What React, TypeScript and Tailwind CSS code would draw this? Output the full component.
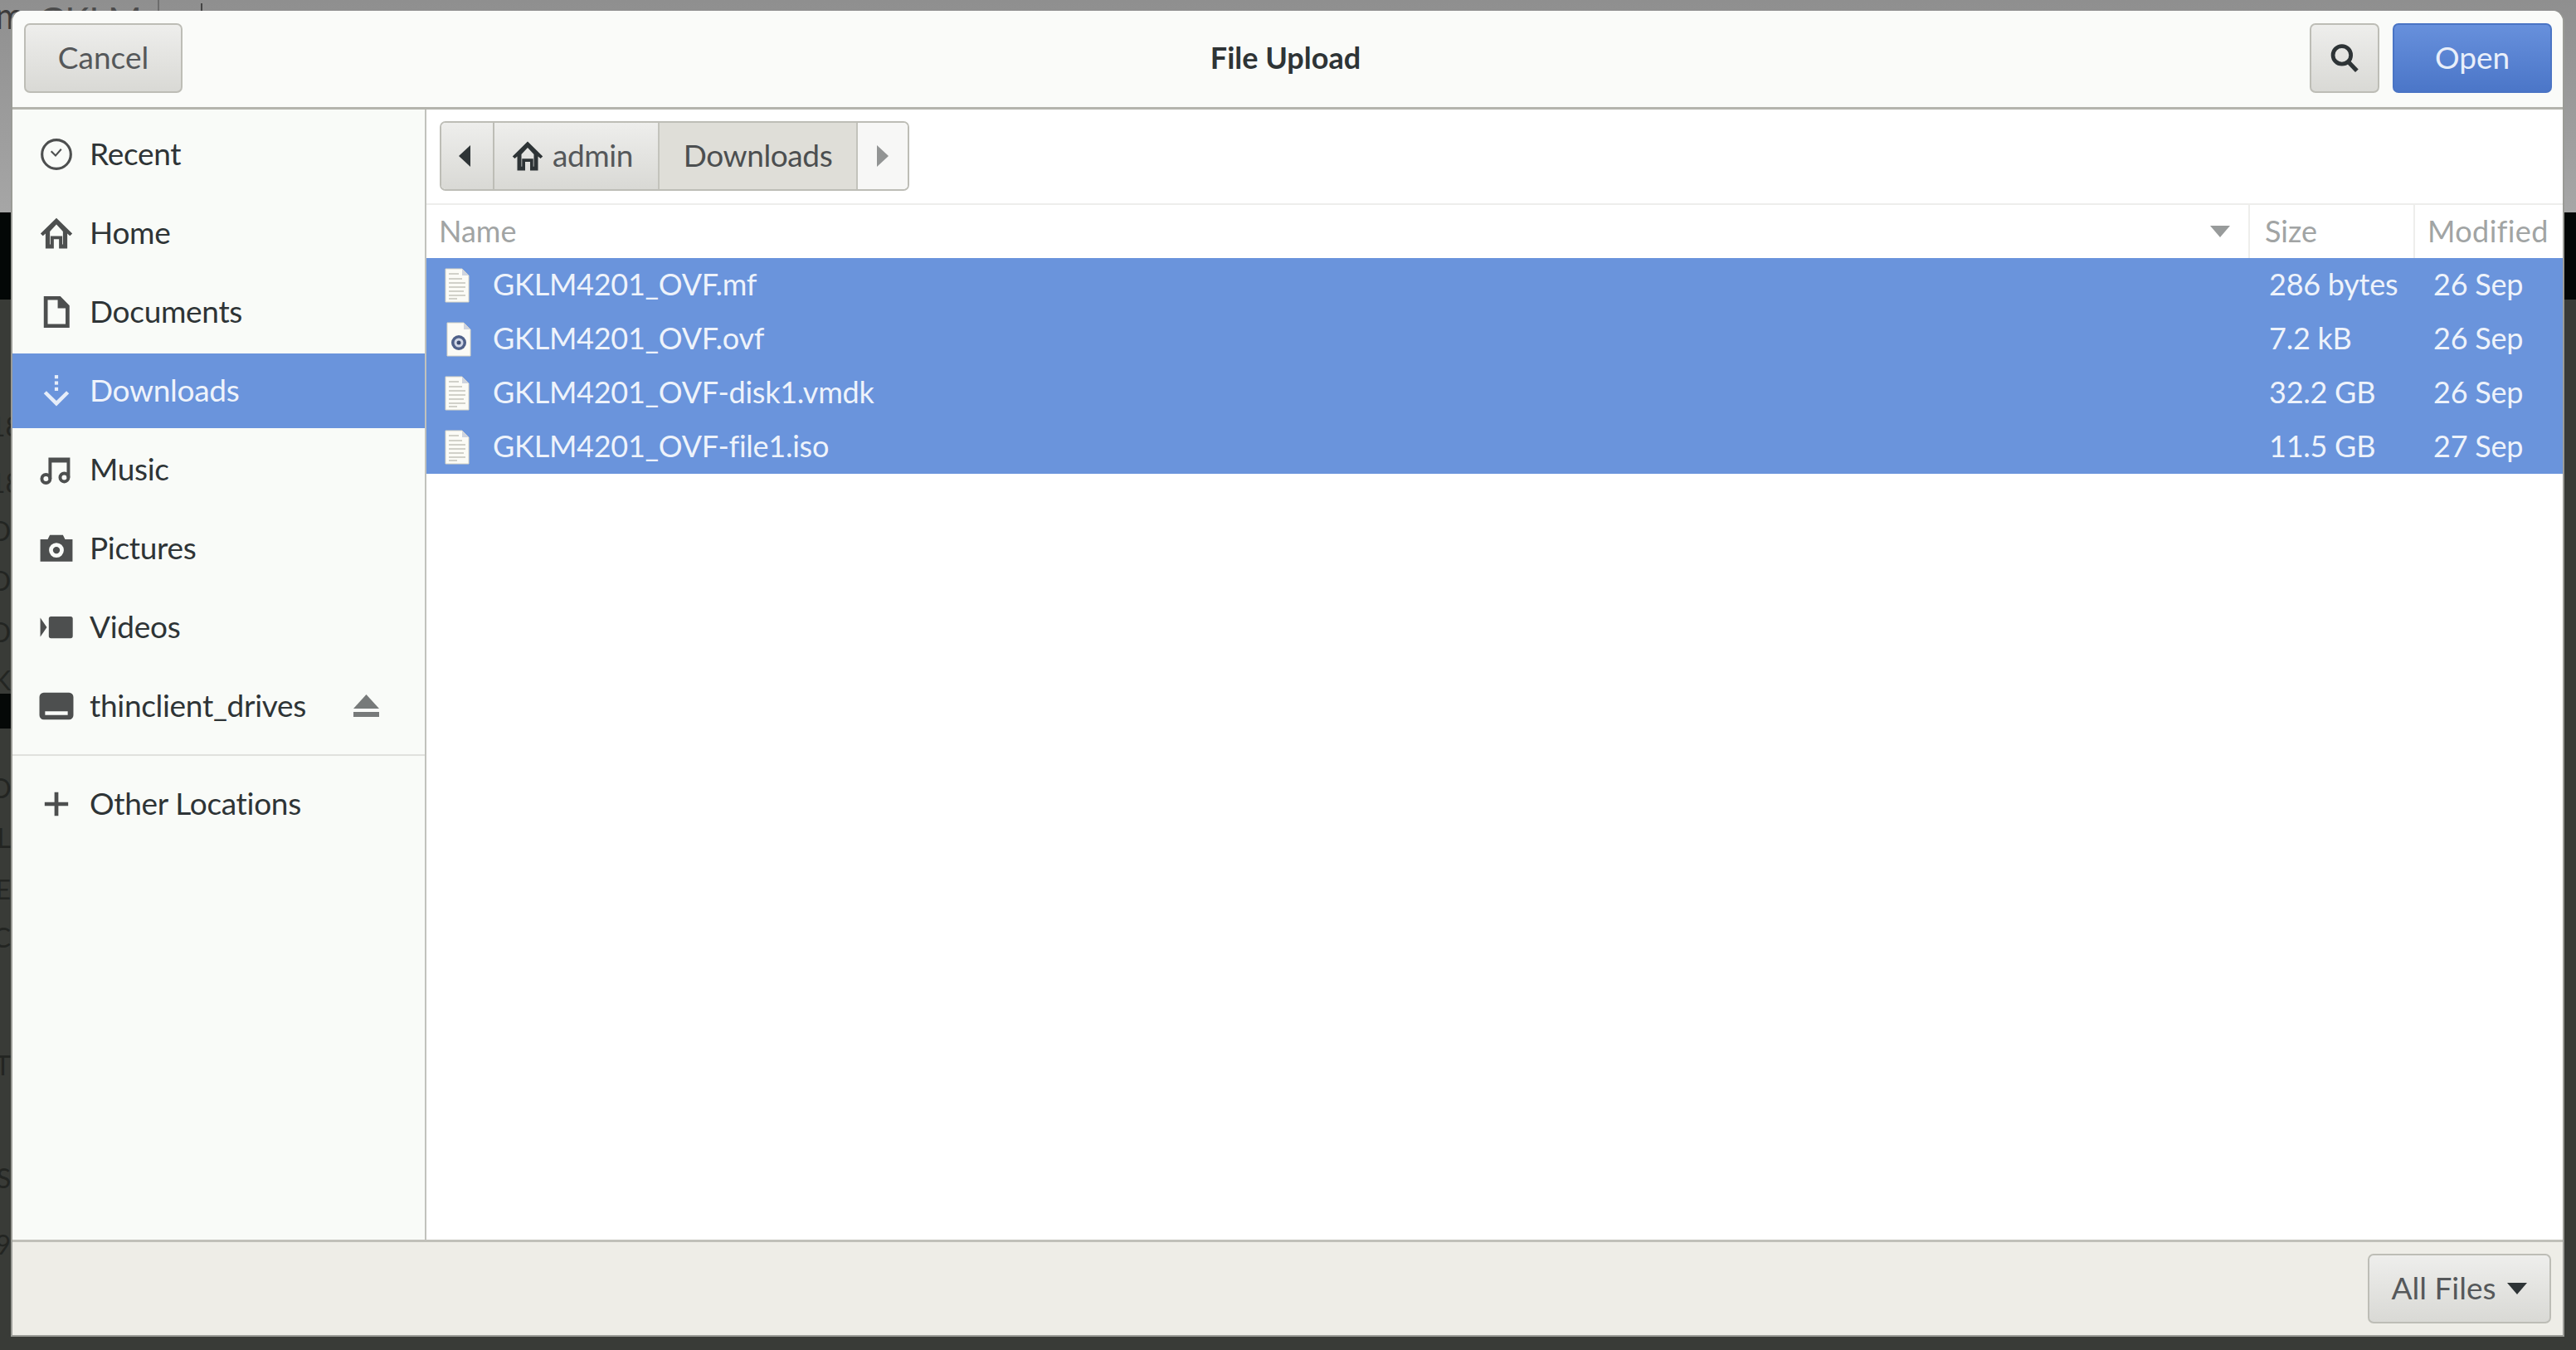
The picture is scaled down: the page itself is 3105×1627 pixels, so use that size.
import React from "react";

const font = "font-['Lato','Noto_Sans',sans-serif]";

function Ico({ children, className }: { children: React.ReactNode; className: string }) {
  return (
    <svg viewBox="0 0 16 16" className={className} fill="currentColor" stroke="none">
      {children}
    </svg>
  );
}

const icons: Record<string, React.ReactNode> = {
  clock: (
    <g fill="none" stroke="currentColor">
      <circle cx="8" cy="8" r="6.6" strokeWidth="1.2" />
      <path d="M5.6 6.6 7.6 8.6l2.6-3" strokeWidth="0.8" />
    </g>
  ),
  home: <path d="M8 1 .7 8.2l1.1 1L3 8.2V15h3.8v-4.2h2.4V15H13V8.2l1.2 1 1.1-1L8 1Zm-3 8.2v3.9h.3V9.3h5.4v3.8h.3V7.2L8 4 5 7.2v2Z" fillRule="evenodd" />,
  doc: <path d="M2.2.8h7.6L14 5v10.2H2.2V.8Zm1.8 1.7v11h8.2V6.3H8.6V2.5H4Z" fillRule="evenodd" />,
  down: (
    <g>
      <rect x="7.2" y="0.8" width="1.6" height="1.6" />
      <rect x="7.2" y="3.6" width="1.6" height="1.6" />
      <rect x="7.2" y="6.4" width="1.6" height="1.6" />
      <path d="M2.2 9.2 8 15l5.8-5.8-1.2-1.1L8 12.6 3.4 8.1 2.2 9.2Z" />
    </g>
  ),
  music: (
    <g fill="none" stroke="currentColor">
      <circle cx="3.2" cy="12.2" r="1.9" strokeWidth="1.5" />
      <circle cx="11.6" cy="11.6" r="1.9" strokeWidth="1.5" />
      <path d="M5.1 12.2V3.2h8.4v8.4" strokeWidth="1.5" />
      <path d="M5.1 4h8.4" strokeWidth="1.5" />
    </g>
  ),
  camera: <path d="M5 1.8h6l1 2h3.4V14H.6V3.8H4l1-2ZM8 5.4a3.4 3.4 0 1 0 0 6.8 3.4 3.4 0 0 0 0-6.8Zm0 1.8a1.6 1.6 0 1 1 0 3.2 1.6 1.6 0 0 1 0-3.2Z" fillRule="evenodd" />,
  video: <path d="M5.5 3h9a1 1 0 0 1 1 1v8a1 1 0 0 1-1 1h-9a1 1 0 0 1-1-1V4a1 1 0 0 1 1-1ZM.6 3.6 3.6 8l-3 4.4V3.6Z" />,
  drive: <path d="M2.2 1.8h11.6A2 2 0 0 1 15.8 3.8v8.4a2 2 0 0 1-2 2H2.2a2 2 0 0 1-2-2V3.8a2 2 0 0 1 2-2Zm.6 8.6v1.7h10.4v-1.7H2.8Z" fillRule="evenodd" />,
  plus: <path d="M7.1 2.6h1.8v4.5h4.5v1.8H8.9v4.5H7.1V8.9H2.6V7.1h4.5V2.6Z" />,
};

function SidebarRow({ icon, label, active, children }: { icon: string; label: string; active?: boolean; children?: React.ReactNode }) {
  return (
    <div className="h-[95px] flex items-center">
      <div className={`h-[90px] w-full flex items-center pl-[32px] ${active ? "bg-[#6a94dc] text-[#eef3fb]" : "text-[#2e3436]"}`}>
        <span className={active ? "text-[#e6edf9]" : "text-[#4d4f4f]"}>
          <Ico className="w-[42px] h-[42px]">{icons[icon]}</Ico>
        </span>
        <span className="ml-[19px] text-[37px] leading-none tracking-[-0.3px] pb-[2px]">{label}</span>
        {children}
      </div>
    </div>
  );
}

function FileIcon({ disc }: { disc?: boolean }) {
  return (
    <svg viewBox="0 0 30 42" className="w-[30px] h-[42px] shrink-0">
      <path d="M1 1h20l8 8v32H1z" fill="#fbfbf6" stroke="#d9d6c6" strokeWidth="1" />
      <path d="M21 1v8h8z" fill="#cfd4de" />
      {disc ? (
        <g>
          <circle cx="15" cy="25" r="9" fill="#4f6189" />
          <circle cx="15" cy="25" r="5.5" fill="#cfd6e6" />
          <circle cx="15" cy="25" r="2.5" fill="#3d4c70" />
        </g>
      ) : (
        <g stroke="#c3c3ba" strokeWidth="1.6">
          <path d="M5 7h12M5 13h16M5 18h20M5 23h20M5 28h18M5 33h20M5 37h10" />
        </g>
      )}
    </svg>
  );
}

function FileRow({ name, size, date, disc }: { name: string; size: string; date: string; disc?: boolean }) {
  return (
    <div className="h-[65px] flex items-center text-[#eef3fb] text-[36px] leading-none tracking-[-0.25px]">
      <div className={`w-[2198px] flex items-center ${disc ? "pl-[24px]" : "pl-[22px]"}`}>
        <FileIcon disc={disc} />
        <span className={`${disc ? "ml-[26px]" : "ml-[28px]"} pb-[3px]`}>{name}</span>
      </div>
      <div className="w-[198px] pl-[23px] pb-[3px]">{size}</div>
      <div className="pl-[23px] pb-[3px]">{date}</div>
    </div>
  );
}

const gradBtn = "bg-linear-to-b from-[#eeeeec] to-[#d9d9d5] border-2 border-[#bdbdb6] rounded-[7px]";

const leftMarks: [string, string][] = [
  ["top-[498px]", "18"],
  ["top-[566px]", "18"],
  ["top-[624px]", "D"],
  ["top-[684px]", "D"],
  ["top-[746px]", "D"],
  ["top-[804px]", "K"],
  ["top-[842px]", "K"],
  ["top-[934px]", "O"],
  ["top-[994px]", "L"],
  ["top-[1056px]", "E"],
  ["top-[1114px]", "C"],
  ["top-[1268px]", "T"],
  ["top-[1404px]", "S"],
  ["top-[1484px]", "9"],
];

export default function App() {
  return (
    <div className={`relative w-[3105px] h-[1627px] overflow-hidden bg-[#383a36] ${font}`}>
      <div className="flex flex-col h-full">
        <div className="h-[256px] bg-linear-to-b from-[#8f8f8f] to-[#a6a6a6] relative">
          <span className="absolute left-[-6px] top-[-4px] text-[44px] text-[#3b3b3b] leading-none">m</span>
          <span className="absolute left-[46px] top-[2px] text-[44px] text-[#4c4c4c] leading-none">GKLM</span>
          <div className="absolute left-[190px] top-0 w-[2px] h-[13px] bg-[#6d6d6d]" />
          <div className="absolute left-[242px] top-[4px] w-[2px] h-[9px] bg-[#444]" />
        </div>
        <div className="h-[105px] bg-[#030706]" />
        <div className="flex-1 bg-[#393b37]" />
      </div>
      {leftMarks.map(([top, t]) => (
        <span key={top} className={`absolute left-[-12px] w-[25px] text-right overflow-hidden text-[32px] leading-none text-[#232522] ${top}`}>
          {t}
        </span>
      ))}
      <div className="absolute left-0 top-[836px] w-[13px] h-[42px] bg-[#050807]" />

      {/* dialog */}
      <div className="absolute left-[13px] top-[13px] w-[3078px] h-[1598px] flex flex-col rounded-t-[14px] overflow-hidden border-l-2 border-r-2 border-b-2 border-[#9a9b96] bg-white">
        {/* header */}
        <div className="h-[119px] shrink-0 grid grid-cols-[1fr_auto_1fr] items-center bg-[#fafbf9] border-b-[3px] border-[#b4b4ad] pl-[14px] pr-[13px] pb-[3px]">
          <div>
            <button className={`w-[191px] h-[84px] text-[37px] text-[#55585a] pb-[2px] ${gradBtn}`}>Cancel</button>
          </div>
          <div className="pr-[6px] pb-[2px] text-[36px] font-bold text-[#2e3436]">File Upload</div>
          <div className="flex justify-end gap-[16px]">
            <button className={`w-[84px] h-[84px] flex items-center justify-center text-[#2e3436] ${gradBtn}`}>
              <svg viewBox="0 0 16 16" className="w-[36px] h-[36px]" fill="none" stroke="currentColor">
                <circle cx="6.6" cy="6.4" r="4.8" strokeWidth="2.1" />
                <path d="M10 10l4.6 4.8" strokeWidth="2.3" />
              </svg>
            </button>
            <button className="w-[192px] h-[84px] rounded-[7px] bg-linear-to-b from-[#6790dc] to-[#4b76c8] border-2 border-[#4a74c4] text-[37px] text-[#e9effa] pb-[2px]">Open</button>
          </div>
        </div>

        {/* body */}
        <div className="flex-1 flex min-h-0">
          <div className="w-[499px] shrink-0 bg-[#f9fbf8] border-r-[2px] border-[#c1c2bd] pt-[6px]">
            <SidebarRow icon="clock" label="Recent" />
            <SidebarRow icon="home" label="Home" />
            <SidebarRow icon="doc" label="Documents" />
            <SidebarRow icon="down" label="Downloads" active />
            <SidebarRow icon="music" label="Music" />
            <SidebarRow icon="camera" label="Pictures" />
            <SidebarRow icon="video" label="Videos" />
            <SidebarRow icon="drive" label="thinclient_drives">
              <svg viewBox="0 0 31 27" className="ml-[57px] w-[31px] h-[27px] text-[#777a7a]" fill="currentColor">
                <path d="M15.5 0 31 17H0z" />
                <rect x="0" y="21" width="31" height="6" />
              </svg>
            </SidebarRow>
            <div className="h-[2px] bg-[#e0e1dd] mt-[11px] mb-[10px]" />
            <SidebarRow icon="plus" label="Other Locations" />
          </div>

          <div className="flex-1 flex flex-col min-w-0 bg-white">
            <div className="h-[115px] shrink-0 border-b-2 border-[#eeeeec] pt-[14px] pl-[16px]">
              <div className="flex w-fit h-[84px] rounded-[7px] border-2 border-[#bdbdb6] overflow-hidden text-[37px] leading-none tracking-[-0.4px]">
                <div className="w-[64px] flex items-center justify-center bg-linear-to-b from-[#eeeeec] to-[#d9d9d5] border-r-2 border-[#bdbdb6] text-[#2e3436]">
                  <svg viewBox="0 0 14 26" className="w-[14px] h-[26px] -ml-[6px]" fill="currentColor"><path d="M14 0v26L0 13z" /></svg>
                </div>
                <div className="w-[197px] flex items-center pl-[20px] bg-linear-to-b from-[#eeeeec] to-[#d9d9d5] text-[#55585a]">
                  <Ico className="w-[40px] h-[40px] text-[#2e3436]">{icons.home}</Ico>
                  <span className="ml-[10px] pb-[3px]">admin</span>
                </div>
                <div className="w-[241px] flex items-center justify-center bg-[#dfded8] border-x-2 border-[#c3c3bc] text-[#4c4f50] pb-[3px]">Downloads</div>
                <div className="w-[60px] flex items-center justify-center bg-[#f7f7f6] text-[#929494]">
                  <svg viewBox="0 0 14 26" className="w-[14px] h-[26px]" fill="currentColor"><path d="M0 0v26l14-13z" /></svg>
                </div>
              </div>
            </div>
            <div className="h-[64px] shrink-0 flex items-center text-[36px] leading-none text-[#a1a4a4]">
              <div className="w-[2198px] pl-[15px] pr-[22px] flex items-center justify-between border-r-2 border-[#eeeeec] h-full">
                <span className="pb-[3px]">Name</span>
                <svg viewBox="0 0 24 14" className="w-[24px] h-[14px] text-[#989b9b]" fill="currentColor"><path d="M0 0h24L12 14z" /></svg>
              </div>
              <div className="w-[199px] pl-[18px] pb-[3px] flex items-center border-r-2 border-[#eeeeec] h-full">Size</div>
              <div className="pl-[15px] pb-[3px] tracking-[0.4px]">Modified</div>
            </div>
            <div className="bg-[#6a94dc]">
              <FileRow name="GKLM4201_OVF.mf" size="286 bytes" date="26 Sep" />
              <FileRow name="GKLM4201_OVF.ovf" size="7.2 kB" date="26 Sep" disc />
              <FileRow name="GKLM4201_OVF-disk1.vmdk" size="32.2 GB" date="26 Sep" />
              <FileRow name="GKLM4201_OVF-file1.iso" size="11.5 GB" date="27 Sep" />
            </div>
          </div>
        </div>

        {/* footer */}
        <div className="h-[115px] shrink-0 bg-[#eeede7] border-t-[3px] border-[#c0c0b9] flex items-center justify-end pr-[14px]">
          <button className={`w-[221px] h-[84px] flex items-center justify-center gap-[14px] text-[37px] text-[#55585a] ${gradBtn}`}>
            <span className="pb-[2px]">All Files</span>
            <svg viewBox="0 0 24 14" className="w-[24px] h-[14px] text-[#2e3436]" fill="currentColor"><path d="M0 0h24L12 14z" /></svg>
          </button>
        </div>
      </div>
    </div>
  );
}
